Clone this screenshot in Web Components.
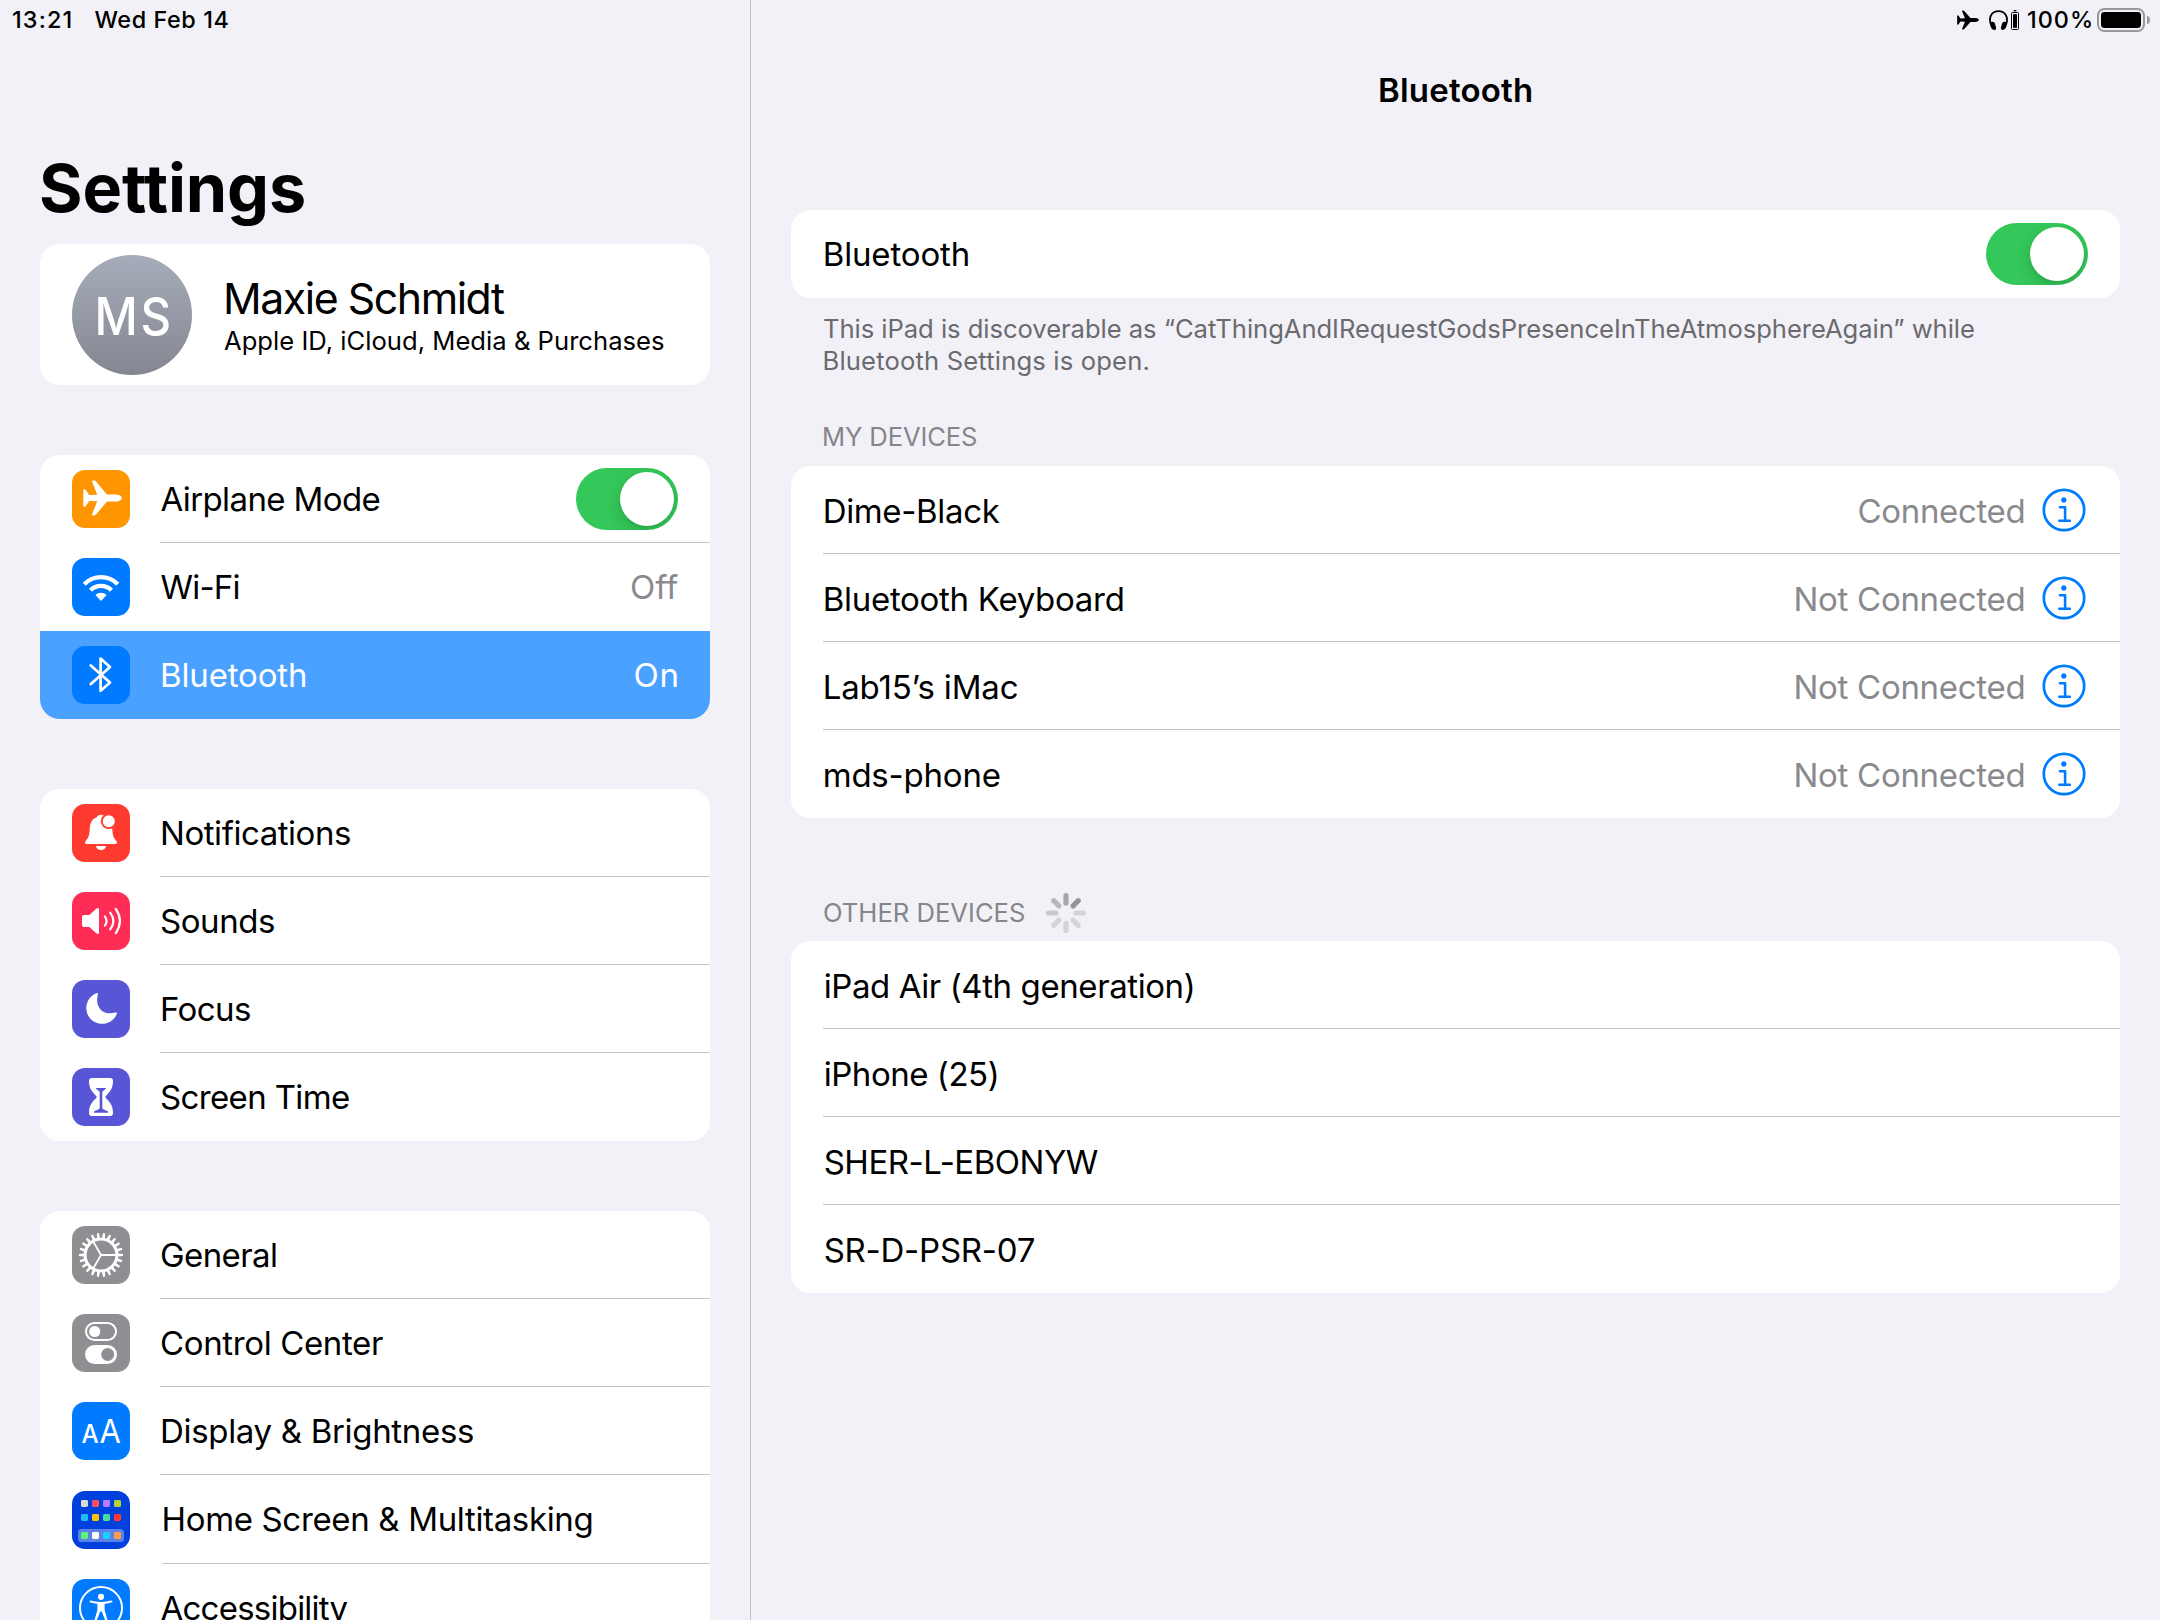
<!DOCTYPE html>
<html lang="en">
<head>
<meta charset="utf-8">
<title>Settings</title>
<style>
  html, body { margin: 0; height: 1620px; overflow: hidden; }
  body { background: #f2f1f7; color: #000; font-family: Inter, "Liberation Sans", sans-serif; font-size: 33px; }
</style>
</head>
<body>
<settings-app>
  <side-bar slot="sidebar">
    <profile-card></profile-card>
    <settings-card>
      <settings-row icon="airplane" label="Airplane Mode" w="219" ink="0.5"><toggle-switch></toggle-switch></settings-row>
      <settings-row icon="wifi" label="Wi-Fi" w="79" ink="0.5" plain value="Off" vw="47"></settings-row>
      <settings-row icon="bluetooth" label="Bluetooth" w="143" selected value="On" vw="42" vr="1.5"></settings-row>
    </settings-card>
    <settings-card>
      <settings-row icon="bell" label="Notifications" w="188"></settings-row>
      <settings-row icon="sound" label="Sounds" w="113" ink="1"></settings-row>
      <settings-row icon="moon" label="Focus" w="88"></settings-row>
      <settings-row icon="hourglass" label="Screen Time" w="188" ink="1"></settings-row>
    </settings-card>
    <settings-card>
      <settings-row icon="gear" label="General" w="115" ink="1"></settings-row>
      <settings-row icon="control" label="Control Center" w="222" ink="1"></settings-row>
      <settings-row icon="display" label="Display &amp; Brightness" w="311"></settings-row>
      <settings-row icon="home" label="Home Screen &amp; Multitasking" w="428" ink="1.5" tall></settings-row>
      <settings-row icon="access" label="Accessibility" w="187" ink="0.5"></settings-row>
    </settings-card>
  </side-bar>
  <detail-pane slot="detail">
    <settings-card>
      <settings-row label="Bluetooth" w="143"><toggle-switch></toggle-switch></settings-row>
    </settings-card>
    <section-footer></section-footer>
    <section-header label="MY DEVICES" w="152" gap="44" after="13"></section-header>
    <settings-card>
      <settings-row label="Dime-Black" w="175" value="Connected" vw="165"><info-button></info-button></settings-row>
      <settings-row label="Bluetooth Keyboard" w="298" value="Not Connected" vw="228"><info-button></info-button></settings-row>
      <settings-row label="Lab15’s iMac" w="193" value="Not Connected" vw="228"><info-button></info-button></settings-row>
      <settings-row label="mds-phone" w="175" value="Not Connected" vw="228"><info-button></info-button></settings-row>
    </settings-card>
    <section-header label="OTHER DEVICES" w="200" gap="79" after="12"><activity-spinner></activity-spinner></section-header>
    <settings-card>
      <settings-row label="iPad Air (4th generation)" w="368"></settings-row>
      <settings-row label="iPhone (25)" w="172"></settings-row>
      <settings-row label="SHER-L-EBONYW" w="272"></settings-row>
      <settings-row label="SR-D-PSR-07" w="210"></settings-row>
    </settings-card>
  </detail-pane>
</settings-app>

<script>
const esc = s => s.replace(/&/g, '&amp;');
class Base extends HTMLElement {
  connectedCallback() {
    if (this.shadowRoot) return;
    this.attachShadow({ mode: 'open' }).innerHTML = this.render();
  }
  attr(n, d = '') { return this.hasAttribute(n) ? this.getAttribute(n) : d; }
}

/* Icon art on a 58 x 58 tile: [tile colour, markup] */
const PLANE = 'M49.7 28C49.7 25.2 46 24.4 42.8 24.4H35L24 11.4Q23.4 10.6 22.4 10.6H20.9Q19.7 10.6 20.1 11.8L25.2 24.7L17.2 25.1L13.8 20Q13.2 19.2 12.3 19.2Q11.3 19.2 11.3 20.3V35.7Q11.3 36.8 12.3 36.8Q13.2 36.8 13.8 36L17.2 30.9L25.2 31.3L20.1 44.2Q19.7 45.4 20.9 45.4H22.4Q23.4 45.4 24 44.6L35 31.6H42.8C46 31.6 49.7 30.8 49.7 28Z';
const gearPath = (() => {
  const n = 22, p = [];
  for (let i = 0; i < n; i++) {
    const a = i * 2 * Math.PI / n;
    for (const [d, r] of [[-0.085, 17.4], [-0.046, 22], [0.046, 22], [0.085, 17.4]])
      p.push((29 + r * Math.cos(a + d)).toFixed(2) + ' ' + (29 + r * Math.sin(a + d)).toFixed(2));
  }
  return 'M' + p.join('L') + 'Z M43.4 29A14.4 14.4 0 1 0 14.6 29A14.4 14.4 0 1 0 43.4 29Z';
})();
const homeDots = [['#d9d9d9', '#ff4b63', '#b77bff', '#b5d334'], ['#1fbdfc', '#ffc20a', '#43dba0', '#ff3b30'], ['#5bf675', '#ffffff', '#1bcdff', '#ff9f43']]
  .map((row, r) => row.map((c, i) => `<rect x="${9 + 11 * i}" y="${[9, 23, 41][r]}" width="7" height="7" rx="1.4" fill="${c}"/>`).join('')).join('');
const ICONS = {
  airplane: ['#ff9500', `<path d="${PLANE}"/>`],
  wifi: ['#007aff', '<g fill="none" stroke="#fff" stroke-width="4.4"><path d="M12.3 26.2A23.3 23.3 0 0 1 45.7 26.2"/><path d="M18.5 32.3A14.7 14.7 0 0 1 39.5 32.3"/></g><path d="M29 42.9L23.4 37.1A8 8 0 0 1 34.6 37.1Z"/>'],
  bluetooth: ['#007aff', '<path d="M18.8 19.5L38 36.5L28.6 44.8V12.6L38 21L18.8 38" fill="none" stroke="#fff" stroke-width="2.7" stroke-linecap="round" stroke-linejoin="round"/>'],
  bell: ['#ff3b30', '<path d="M15 40Q13 40 13 38.5Q13 37.4 14.2 36.2C17 33.2 17.4 30 17.7 25.5C18 18.5 20.2 14.8 24.8 13.3C25.6 11.6 27 10.8 29 10.8C31 10.8 32.4 11.6 33.2 13.3C37.8 14.8 40 18.5 40.3 25.5C40.6 30 41 33.2 43.8 36.2Q45 37.4 45 38.5Q45 40 43 40Z"/><path d="M24 42H34C33.6 44.7 31.6 46.1 29 46.1S24.4 44.7 24 42Z"/><circle cx="36.8" cy="17.2" r="7" stroke="#ff3b30" stroke-width="2"/>'],
  sound: ['#ff2d55', '<path d="M12 23H17.3L24.6 16.6Q27 15 27 17.6V40.4Q27 43 24.6 41.4L17.3 35H12Q10 35 10 33V25Q10 23 12 23Z"/><g fill="none" stroke="#fff" stroke-width="2.2" stroke-linecap="round"><path d="M32.8 24.4Q36.4 29 32.8 33.6"/><path d="M38.2 20.6Q44.6 29 38.2 37.4"/><path d="M43.8 16.9Q52 29 43.8 41.1"/></g>'],
  moon: ['#5856d6', '<path d="M24.3 13.2Q26.5 12.4 25.9 14.6C22.6 26 30 36.2 43.2 32.6Q45.7 31.9 44.7 34.2C42.2 40 36.8 43.8 30.3 43.8C21.3 43.8 14.3 37 14.3 28C14.3 21.5 18.3 15.6 24.3 13.2Z"/>'],
  hourglass: ['#5856d6', '<path d="M20 10H38Q41 10 41 13C41 20 38.3 23.6 33.6 28.2Q33 29 33.6 29.8C38.3 34.4 41 38 41 45Q41 48 38 48H20Q17 48 17 45C17 38 19.7 34.4 24.4 29.8Q25 29 24.4 28.2C19.7 23.6 17 20 17 13Q17 10 20 10Z"/><path fill="#5856d6" d="M24.4 20H33.6Q34.6 20 33.8 20.8L30.3 23.8V40.2Q31 41.5 35.4 43Q36.2 43.4 36 44.7H22Q21.8 43.4 22.6 43Q27 41.5 27.7 40.2V23.8L24.2 20.8Q23.4 20 24.4 20Z"/>'],
  gear: ['#8e8e93', `<path fill-rule="evenodd" d="${gearPath}"/><path d="M29 29H44M29 29L21.5 16M29 29L21.5 42" stroke="#fff" stroke-width="1.8"/>`],
  control: ['#8e8e93', '<rect x="14" y="9" width="30" height="17" rx="8.5" fill="none" stroke="#fff" stroke-width="2"/><circle cx="22.7" cy="17.5" r="5.6"/><rect x="13" y="31" width="32" height="19" rx="9.5"/><circle cx="35.7" cy="40.5" r="6.5" fill="#8e8e93"/>'],
  display: ['#007aff', '<g font-family="Inter, sans-serif"><text x="9.4" y="41" font-size="25.6" font-weight="500" textLength="17.2" lengthAdjust="spacingAndGlyphs">A</text><text x="27.4" y="41" font-size="33" font-weight="400" textLength="21.4" lengthAdjust="spacingAndGlyphs">A</text></g>'],
  home: ['#0040dd', `<rect x="6" y="38" width="46" height="13" rx="3.6" fill="#5c82ea"/>${homeDots}`],
  access: ['#007aff', '<circle cx="29" cy="29" r="21" fill="none" stroke="#fff" stroke-width="2"/><circle cx="29" cy="17.8" r="3.1"/><path d="M18.6 21.6Q23 23 29 23T39.4 21.6Q40.6 21.6 40.4 22.7Q40.2 23.4 39.4 23.6L32.6 25V31L35.6 41.4Q35.8 42.8 34.6 42.8Q33.8 42.8 33.4 41.8L29.8 32.6H28.2L24.6 41.8Q24.2 42.8 23.4 42.8Q22.2 42.8 22.4 41.4L25.4 31V25L18.6 23.6Q17.8 23.4 17.6 22.7Q17.4 21.6 18.6 21.6Z"/>']
};

class AppIcon extends Base {
  render() {
    const [bg, art] = ICONS[this.attr('name')];
    return `<style>:host{display:block;width:58px;height:58px;flex:none;border-radius:13px;overflow:hidden;background:${bg}}svg{display:block}</style>
      <svg width="58" height="58" viewBox="0 0 58 58" fill="#fff">${art}</svg>`;
  }
}
class ToggleSwitch extends Base {
  render() {
    return `<style>:host{display:flex;justify-content:flex-end;box-sizing:border-box;width:102px;height:62px;padding:4px;border-radius:31px;background:#34c759;overflow:hidden}
      i{display:block;width:54px;height:54px;border-radius:50%;background:#fff;box-shadow:0 6px 16px rgba(0,0,0,.15),0 2px 2px rgba(0,0,0,.05)}</style><i></i>`;
  }
}
class InfoButton extends Base {
  render() {
    return `<style>:host{display:block;width:44px;height:44px;margin:-1px 2.5px 0 0}svg{display:block}</style>
      <svg width="44" height="44" viewBox="0 0 44 44" fill="#007aff"><circle cx="22" cy="22" r="20.2" fill="none" stroke="#007aff" stroke-width="2.7"/>
      <circle cx="21.8" cy="11.9" r="2.6"/><path d="M18 19.2H23.1V32.8M17.3 32.8H27.9" fill="none" stroke="#007aff" stroke-width="2.6" stroke-linecap="round" stroke-linejoin="round"/></svg>`;
  }
}
class ActivitySpinner extends Base {
  render() {
    const c = ['#a5a5aa', '#939398', '#d3d3d8', '#d3d3d8', '#d3d3d8', '#d3d3d8', '#c8c8cd', '#b7b7bc'];
    return `<style>:host{display:block;width:40px;height:40px}svg{display:block}</style><svg width="40" height="40" viewBox="-20 -20 40 40">` +
      c.map((k, i) => `<rect x="-2.6" y="-20" width="5.2" height="12.6" rx="2.6" fill="${k}" transform="rotate(${i * 45})"/>`).join('') + '</svg>';
  }
}
class SettingsCard extends Base {
  render() { return `<style>:host{display:flex;flex-direction:column;background:#fff;border-radius:20px;overflow:hidden}</style><slot></slot>`; }
}
class SettingsRow extends Base {
  render() {
    const icon = this.attr('icon'), value = this.attr('value');
    const sel = this.hasAttribute('selected'), tall = this.hasAttribute('tall');
    const last = this.parentElement.lastElementChild === this && icon !== 'access';
    const line = last || this.hasAttribute('plain') ? 'transparent' : '#c3c3c6';
    const toggle = this.querySelector('toggle-switch');
    return `<style>
      :host{display:flex;height:${tall ? 89 : 88}px;padding-left:32px;background:${sel ? '#4ba1ff' : '#fff'};color:${sel ? '#fff' : '#000'}}
      app-icon{margin:${tall ? 16 : 15}px ${tall ? 32 : 30}px 0 0}
      .body{flex:1;display:flex;align-items:center;box-sizing:border-box;padding:${icon || toggle ? 0 : 2}px 32px 0 ${this.attr('ink', icon ? '2' : '1.7')}px;border-bottom:1px solid ${line}}
      .label{flex:1}.value{color:${sel ? '#fff' : '#8a8a8e'};margin-right:${this.attr('vr', '0')}px}
      .value.gap{margin-right:18px}
      </style>${icon ? `<app-icon name="${icon}"></app-icon>` : ''}
      <div class="body"><div class="label"><fit-text w="${this.attr('w')}">${esc(this.attr('label'))}</fit-text></div>
      ${value ? `<div class="value ${this.children.length ? 'gap' : ''}"><fit-text w="${this.attr('vw')}">${value}</fit-text></div>` : ''}<slot></slot></div>`;
  }
}
class ProfileCard extends Base {
  render() {
    return `<style>:host{display:flex;align-items:center;height:141px;background:#fff;border-radius:20px;box-sizing:border-box;padding-left:32px}
      .avatar{width:120px;height:120px;border-radius:50%;background:linear-gradient(#a6acba,#848791);display:flex;align-items:center;justify-content:center;color:#fff;font-size:51.5px;font-weight:500;line-height:60px}
      .avatar fit-text{margin:3px 0 0 2px;transform:scaleX(.92)}
      .text{display:flex;flex-direction:column;margin:0 0 0 32px}
      .name{font-size:42.8px;line-height:52px;padding-left:2px}.sub{font-size:25.6px;line-height:32px}</style>
      <div class="avatar"><fit-text w="77">MS</fit-text></div>
      <div class="text"><fit-text class="name" w="279">Maxie Schmidt</fit-text><fit-text class="sub" w="440">Apple ID, iCloud, Media &amp; Purchases</fit-text></div>`;
  }
}
class SideBar extends Base {
  render() {
    return `<style>:host{display:flex;flex-direction:column;padding:0 40px}
      .time{display:flex;gap:24px;height:40px;margin-left:-27px;font-size:23.4px;font-weight:500;line-height:40px}
      h1{margin:108px 0 16px 1px;font-size:66.5px;line-height:80px;font-weight:700;height:80px}
      .groups{display:flex;flex-direction:column;gap:70px}</style>
      <div class="time"><fit-text w="57.5">13:21</fit-text><fit-text w="134">Wed Feb 14</fit-text></div>
      <h1><fit-text w="263">Settings</fit-text></h1><div class="groups"><slot></slot></div>`;
  }
}
class StatusIcons extends Base {
  render() {
    return `<style>:host{display:flex;align-items:center;justify-content:flex-end;height:40px;padding-right:10px;font-size:23.4px;line-height:40px;font-weight:500}svg{display:block}</style>
      <svg width="22" height="20" viewBox="11 9.5 39.2 37" preserveAspectRatio="none"><path d="${PLANE}"/></svg>
      <svg width="20" height="20" viewBox="0 0 20 20" style="margin-left:10px"><path d="M1.9 14.5C-1 6.5 3.5 1.2 9.5 1.2S20 6.5 17.1 14.5" fill="none" stroke="#000" stroke-width="1.8"/><path d="M1 12.6C2.8 11.2 5 11.6 5.8 13.2L7 17.2C7.5 19 6.6 20 5.2 20C2.6 20 .8 16 1 12.6ZM18 12.6C16.2 11.2 14 11.6 13.2 13.2L12 17.2C11.5 19 12.4 20 13.8 20C16.4 20 18.2 16 18 12.6Z"/></svg>
      <svg width="8" height="20" viewBox="0 0 8 20" style="margin-left:2px"><rect x=".5" y="2.5" width="7" height="17" rx="1" fill="none" stroke="#000"/><rect x="2" y="4.2" width="4" height="13.6"/><rect x="2.6" y="0" width="2.8" height="1.4"/></svg>
      <fit-text w="63" style="margin-left:9px">100%</fit-text>
      <svg width="53" height="24" viewBox="0 0 53 24" style="margin-left:6px"><rect x="1" y="1" width="46" height="22" rx="6.4" fill="none" stroke="#98979c" stroke-width="2"/><rect x="4" y="4" width="40" height="16" rx="3.4"/><path d="M50 7.6Q53 9 53 12T50 16.4Z" fill="#98979c"/></svg>`;
  }
}
class SectionHeader extends Base {
  render() {
    return `<style>:host{display:flex;align-items:center;height:32px;margin:${this.attr('gap')}px 0 ${this.attr('after')}px;padding-left:33px;font-size:25.6px;line-height:32px;color:#85858b;gap:22px}</style>
      <fit-text w="${this.attr('w')}">${this.attr('label')}</fit-text><slot></slot>`;
  }
}
class SectionFooter extends Base {
  render() {
    return `<style>:host{display:flex;flex-direction:column;padding:15px 0 0 33px;font-size:25.6px;line-height:32px;color:#6a6a6f}.b{margin-left:.5px}</style>
      <fit-text w="1150">This iPad is discoverable as “CatThingAndIRequestGodsPresenceInTheAtmosphereAgain” while</fit-text>
      <fit-text class="b" w="324">Bluetooth Settings is open.</fit-text>`;
  }
}
class DetailPane extends Base {
  render() {
    return `<style>:host{display:flex;flex-direction:column;padding:0 40px;border-left:1px solid #c4c4c8}
      status-icons{margin-right:-40px}
      header{display:flex;justify-content:center;align-items:center;height:100px;margin-bottom:70px;font-weight:600}</style>
      <status-icons></status-icons><header><fit-text w="151">Bluetooth</fit-text></header><slot></slot>`;
  }
}
class SettingsApp extends Base {
  render() {
    return `<style>:host{display:grid;grid-template-columns:750px 1fr;height:1620px;overflow:hidden}::slotted(*){min-width:0}</style>
      <slot name="sidebar"></slot><slot name="detail"></slot>`;
  }
}
/* A single line of text tracked so that its ink spans w pixels. */
class FitText extends Base {
  static ctx = document.createElement('canvas').getContext('2d');
  render() {
    const s = getComputedStyle(this), text = this.textContent, w = +this.attr('w'), c = FitText.ctx;
    c.font = `${s.fontWeight} ${s.fontSize} ${s.fontFamily}`;
    const m = c.measureText(text), ink = m.actualBoundingBoxLeft + m.actualBoundingBoxRight;
    const track = (w - ink) / (text.length - 1);
    return `<style>:host{display:block;width:${w}px;white-space:nowrap}
      span{display:block;width:max-content;margin-left:${m.actualBoundingBoxLeft}px;letter-spacing:${track.toFixed(3)}px}</style><span><slot></slot></span>`;
  }
}
for (const [n, k] of Object.entries({
  'settings-app': SettingsApp, 'side-bar': SideBar, 'detail-pane': DetailPane, 'status-icons': StatusIcons,
  'profile-card': ProfileCard, 'settings-card': SettingsCard, 'settings-row': SettingsRow, 'section-header': SectionHeader,
  'section-footer': SectionFooter, 'toggle-switch': ToggleSwitch, 'info-button': InfoButton,
  'activity-spinner': ActivitySpinner, 'app-icon': AppIcon, 'fit-text': FitText })) customElements.define(n, k);
</script>
</body>
</html>
